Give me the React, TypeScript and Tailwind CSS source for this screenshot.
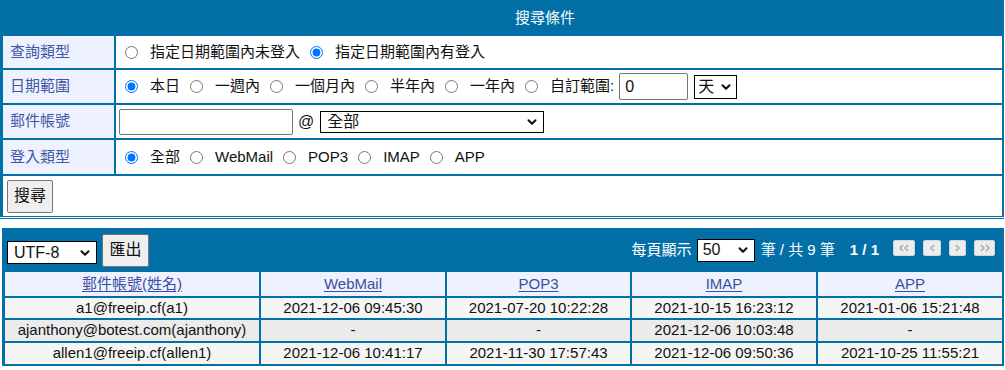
import React from "react";
import { ChevronDown } from "lucide-react";

interface RadioItem {
  label: string;
  checked?: boolean;
}

const queryTypes: RadioItem[] = [
  { label: "指定日期範圍內未登入" },
  { label: "指定日期範圍內有登入", checked: true },
];

const dateRanges: RadioItem[] = [
  { label: "本日", checked: true },
  { label: "一週內" },
  { label: "一個月內" },
  { label: "半年內" },
  { label: "一年內" },
];

const loginTypes: RadioItem[] = [
  { label: "全部", checked: true },
  { label: "WebMail" },
  { label: "POP3" },
  { label: "IMAP" },
  { label: "APP" },
];

const columns = ["郵件帳號(姓名)", "WebMail", "POP3", "IMAP", "APP"];

const rows = [
  ["a1@freeip.cf(a1)", "2021-12-06 09:45:30", "2021-07-20 10:22:28", "2021-10-15 16:23:12", "2021-01-06 15:21:48"],
  ["ajanthony@botest.com(ajanthony)", "-", "-", "2021-12-06 10:03:48", "-"],
  ["allen1@freeip.cf(allen1)", "2021-12-06 10:41:17", "2021-11-30 17:57:43", "2021-12-06 09:50:36", "2021-10-25 11:55:21"],
];

const RadioGroup: React.FC<{ name: string; items: RadioItem[] }> = ({ name, items }) => (
  <>
    {items.map((item) => (
      <label key={item.label} className="flex items-center">
        <input
          type="radio"
          name={name}
          defaultChecked={item.checked}
          className="m-0 h-[13px] w-[13px] accent-[#0075ff]"
        />
        <span className="ml-[12px]">{item.label}</span>
      </label>
    ))}
  </>
);

const Label: React.FC<{ children: React.ReactNode }> = ({ children }) => (
  <div className="flex items-center bg-[#eef2fe] pl-[7px] text-[#3f56a5]">{children}</div>
);

// pager buttons, greyed out
const NavBtn: React.FC<{ w: string; dir: "l" | "r"; double?: boolean }> = ({ w, dir, double }) => {
  const pts = dir === "l" ? "5,1 2,4 5,7" : "2,1 5,4 2,7";
  return (
    <div className={`flex h-[16px] ${w} items-center justify-center rounded-[2px] border border-[#d6d6d6] bg-[#ececec]`}>
      <svg width={double ? 12 : 7} height="8" viewBox={double ? "0 0 12 8" : "0 0 7 8"}>
        <polyline points={pts} fill="none" stroke="#adadad" strokeWidth="1.6" />
        {double && (
          <polyline
            points={dir === "l" ? "10,1 7,4 10,7" : "7,1 10,4 7,7"}
            fill="none"
            stroke="#adadad"
            strokeWidth="1.6"
          />
        )}
      </svg>
    </div>
  );
};

export default function App() {
  return (
    <div className="w-[1005px] h-[370px] bg-white font-['Liberation_Sans','Noto_Sans_CJK_TC',sans-serif] text-[15px] text-[#111] overflow-hidden">
      {/* search form */}
      <div className="w-[1004px] border-b border-[#0270a7] pb-[1px]">
        <div className="bg-[#0270a7] pl-[3px] pr-[2px] pb-[1px]">
          <div className="flex h-[36px] items-center pl-[512px] text-white">搜尋條件</div>
          <div className="grid grid-cols-[111px_886px] grid-rows-[32px_33px_33px_34px_40px] gap-[2px]">
            <Label>查詢類型</Label>
            <div className="flex items-center gap-[10px] bg-white pl-[9px]">
              <RadioGroup name="qtype" items={queryTypes} />
            </div>

            <Label>日期範圍</Label>
            <div className="flex items-center gap-[10px] bg-white pl-[9px]">
              <RadioGroup name="range" items={dateRanges} />
              <label className="flex items-center">
                <input type="radio" name="range" className="m-0 h-[13px] w-[13px]" />
                <span className="ml-[12px]">自訂範圍:</span>
              </label>
              <input
                type="text"
                defaultValue="0"
                className="-ml-[5px] h-[27px] w-[69px] rounded-[2px] border border-[#767676] px-[5px] text-[16px]"
              />
              <div className="-ml-[4px] flex h-[24px] w-[43px] items-center justify-between border border-black px-[3px] text-[16px]">
                <span>天</span>
                <ChevronDown size={14} strokeWidth={3.5} />
              </div>
            </div>

            <Label>郵件帳號</Label>
            <div className="flex items-center bg-white pl-[3px]">
              <input
                type="text"
                className="h-[26px] w-[174px] rounded-[2px] border border-[#767676]"
              />
              <span className="ml-[5px] text-[16px]">@</span>
              <div className="ml-[6px] flex h-[22px] w-[224px] items-center justify-between border border-black pl-[6px] pr-[4px] text-[16px]">
                <span>全部</span>
                <ChevronDown size={14} strokeWidth={3.5} />
              </div>
            </div>

            <Label>登入類型</Label>
            <div className="flex items-center gap-[10px] bg-white pl-[9px]">
              <RadioGroup name="ltype" items={loginTypes} />
            </div>

            <div className="col-span-2 flex items-center bg-white pl-[4px]">
              <button className="h-[33px] w-[46px] rounded-[2px] border border-[#767676] bg-[#efefef] text-[16px]">
                搜尋
              </button>
            </div>
          </div>
        </div>
      </div>

      {/* result table */}
      <div className="ml-[2px] mt-[9px] w-[1002px] bg-[#0270a7] pl-[3px] pr-[1px] pb-[2px]">
        <div className="flex h-[44px] items-center">
          <div className="ml-[2px] mt-[5px] flex h-[23px] w-[90px] items-center justify-between border border-black bg-white pl-[6px] pr-[4px] text-[16px]">
            <span>UTF-8</span>
            <ChevronDown size={14} strokeWidth={3.5} />
          </div>
          <button className="ml-[5px] h-[33px] w-[47px] rounded-[2px] border border-[#767676] bg-[#efefef] text-[16px]">
            匯出
          </button>
          <div className="ml-auto flex items-center pr-[8px] text-white">
            <span>每頁顯示</span>
            <div className="ml-[5px] flex h-[23px] w-[58px] items-center justify-between border border-black bg-white pl-[5px] pr-[4px] text-[16px] text-[#111]">
              <span>50</span>
              <ChevronDown size={14} strokeWidth={3.5} />
            </div>
            <span className="ml-[6px]">筆 / 共 9 筆</span>
            <span className="ml-[15px] font-bold">1 / 1</span>
            <div className="ml-[14px] flex items-center gap-[8px] -mt-[4px]">
              <NavBtn w="w-[22px]" dir="l" double />
              <NavBtn w="w-[18px]" dir="l" />
              <NavBtn w="w-[17px]" dir="r" />
              <NavBtn w="w-[21px]" dir="r" double />
            </div>
          </div>
        </div>
        <div className="grid grid-cols-[254px_184px_183px_184px_184px] grid-rows-[24px_20px_21px_21px] gap-[2px]">
          {columns.map((c) => (
            <div key={c} className="flex items-center justify-center bg-[#eef2fe]">
              <a className="text-[#3a4fa0] underline underline-offset-2">{c}</a>
            </div>
          ))}
          {rows.map((r, i) =>
            r.map((cell, j) => (
              <div
                key={`${i}-${j}`}
                className={`flex items-center justify-center ${i === 1 ? "bg-[#ebebeb]" : "bg-[#f5f5f5]"}`}
              >
                {cell}
              </div>
            ))
          )}
        </div>
      </div>
    </div>
  );
}
